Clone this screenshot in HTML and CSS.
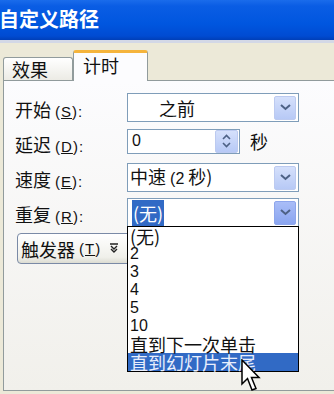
FILE: index.html
```html
<!DOCTYPE html>
<html lang="zh-CN">
<head>
    <meta charset="UTF-8">
    <meta name="viewport" content="width=device-width, initial-scale=1.0">
    <title>自定义路径</title>
    <link rel="stylesheet" href="styles.css">
</head>
<body>
    <div class="titlebar">自定义路径</div>
    <div class="titlestrip"></div>

    <div class="dialog">
        <div class="tabs">
            <div class="tab">效果</div>
            <div class="tab active">计时</div>
        </div>

        <div class="panel">
            <div class="row">
                <label>开始 <span class="key">(<u>S</u>):</span></label>
                <div class="select">
                    <span class="value start">之前</span>
                    <span class="dropbtn"><svg width="11" height="7" viewBox="0 0 11 7"><path d="M1 1 L5.5 5 L10 1" fill="none" stroke="#4d6185" stroke-width="2"/></svg></span>
                </div>
            </div>

            <div class="row">
                <label>延迟 <span class="key">(<u>D</u>):</span></label>
                <div class="delay">
                    <div class="spin">
                        <span class="value lat">0</span>
                        <span class="spinbtn">
                            <svg width="9" height="16" viewBox="0 0 9 16"><path d="M1 6 L4.5 2.5 L8 6 M1 10 L4.5 13.5 L8 10" fill="none" stroke="#4d6185" stroke-width="1.6"/></svg>
                        </span>
                    </div>
                    <span class="unit">秒</span>
                </div>
            </div>

            <div class="row">
                <label>速度 <span class="key">(<u>E</u>):</span></label>
                <div class="select">
                    <span class="value">中速 <span class="lat">(2</span> 秒)</span>
                    <span class="dropbtn"><svg width="11" height="7" viewBox="0 0 11 7"><path d="M1 1 L5.5 5 L10 1" fill="none" stroke="#4d6185" stroke-width="2"/></svg></span>
                </div>
            </div>

            <div class="row">
                <label>重复 <span class="key">(<u>R</u>):</span></label>
                <div class="select open">
                    <span class="value"><span class="picked">(无)</span></span>
                    <span class="dropbtn hot"><svg width="11" height="7" viewBox="0 0 11 7"><path d="M1 1 L5.5 5 L10 1" fill="none" stroke="#4d6185" stroke-width="2"/></svg></span>

                    <ul class="droplist">
                        <li>(无)</li>
                        <li class="lat">2</li>
                        <li class="lat">3</li>
                        <li class="lat">4</li>
                        <li class="lat">5</li>
                        <li class="lat">10</li>
                        <li>直到下一次单击</li>
                        <li class="current">直到幻灯片末尾</li>
                    </ul>
                </div>
            </div>

            <button class="trigger">触发器 <span class="key">(<u>T</u>)</span>
                <svg class="dbl" width="8" height="11" viewBox="0 0 8 11"><path d="M0 1 H8 M1 3 L4 6 L7 3 M1 6 L4 9 L7 6" fill="none" stroke="#222" stroke-width="1.4"/></svg>
            </button>
        </div>
    </div>

    <svg class="cursor" width="22" height="36" viewBox="0 0 22 36">
        <path d="M1 1 L1 25 L6.5 19.5 L11 31 L15 29.5 L10.5 18.5 L18 18.5 Z" fill="#fff" stroke="#000" stroke-width="1.5" stroke-linejoin="miter"/>
    </svg>
</body>
</html>
```

FILE: styles.css
```css
body {
    margin: 0;
    width: 334px;
    height: 394px;
    overflow: hidden;
    position: relative;
    background-color: #ece9d8;
    font-family: "Noto Sans CJK SC", "Liberation Sans", sans-serif;
    font-size: 18px;
    color: #111;
}
.titlebar {
    height: 40px;
    box-sizing: border-box;
    padding: 7px 0 0 0;
    text-indent: -1px;
    color: #fff;
    font-weight: bold;
    font-size: 20px;
    line-height: 24px;
    background: linear-gradient(to bottom, #1a6ceb 0%, #0a5de4 15%, #0056df 60%, #004bd2 90%, #003fb8 100%);
}
.titlestrip {
    height: 3px;
    background-color: #d3d8e6;
}
.dialog {
    padding: 7px 0 0 3px;
}
.tabs {
    display: flex;
    align-items: flex-end;
    height: 30px;
    position: relative;
    z-index: 1;
}
.tab {
    width: 70px;
    height: 23px;
    box-sizing: border-box;
    border: 1px solid #919b9c;
    border-bottom: none;
    border-radius: 3px 3px 0 0;
    background: linear-gradient(to bottom, #ffffff, #ecebe5);
    padding-left: 8px;
    line-height: 22px;
    font-size: 18px;
}
.tab.active {
    width: 75px;
    height: 31px;
    margin-bottom: -1px;
    border-top: 3px solid #f5b43c;
    background: #fcfcfe;
    padding-left: 9px;
    line-height: 24px;
}
.panel {
    height: 311px;
    box-sizing: border-box;
    border: 1px solid #919b9c;
    border-right: none;
    background: linear-gradient(to bottom, #fcfcfe, #f1f0eb);
    padding: 12px 0 0 11px;
}
.row {
    display: grid;
    grid-template-columns: 112px 172px;
    align-items: center;
    height: 29px;
    margin-bottom: 6px;
}
.row label {
    white-space: nowrap;
    padding-top: 2px;
}
.key {
    font-family: "Liberation Sans", sans-serif;
    font-size: 15px;
    letter-spacing: 1px;
}
.lat {
    font-family: "Liberation Sans", sans-serif;
    font-size: 16px;
}
.select {
    position: relative;
    height: 29px;
    box-sizing: border-box;
    border: 1px solid #7f9db9;
    background-color: #fff;
    display: flex;
    align-items: center;
    justify-content: space-between;
    padding: 0 2px 0 2px;
}
.value {
    white-space: nowrap;
    line-height: 20px;
}
.value.start {
    padding-left: 29px;
}
.dropbtn {
    width: 22px;
    height: 24px;
    box-sizing: border-box;
    border: 1px solid #bccaf0;
    border-radius: 2px;
    background: linear-gradient(to bottom, #d5e0fb, #b7c9f6);
    display: flex;
    align-items: center;
    justify-content: center;
}
.dropbtn.hot {
    border-color: #8ea6ec;
    background: linear-gradient(to bottom, #a9bdf7, #8aa5f0);
}
.picked {
    background-color: #316ac5;
    color: #fff;
    padding: 0 1px;
    margin-left: 2px;
}
.delay {
    display: flex;
    align-items: center;
    align-self: start;
}
.spin {
    width: 113px;
    height: 25px;
    box-sizing: border-box;
    border: 1px solid #7f9db9;
    background-color: #fff;
    display: flex;
    align-items: center;
    justify-content: space-between;
    padding: 0 1px 0 4px;
}
.spinbtn {
    width: 23px;
    height: 23px;
    box-sizing: border-box;
    border: 1px solid #bccaf0;
    border-radius: 2px;
    background: linear-gradient(to bottom, #d5e0fb, #b7c9f6);
    display: flex;
    align-items: center;
    justify-content: center;
}
.unit {
    margin-left: 10px;
}
.droplist {
    position: absolute;
    left: -1px;
    top: 27px;
    width: 172px;
    margin: 0;
    padding: 0;
    list-style: none;
    box-sizing: border-box;
    border: 1px solid #000;
    background-color: #fff;
    z-index: 2;
}
.droplist li {
    height: 18px;
    line-height: 18px;
    padding-left: 2px;
    white-space: nowrap;
}
.droplist li.lat {
    font-size: 16px;
}
.droplist li.current {
    background-color: #316ac5;
    color: #e8eefc;
}
.trigger {
    margin: 4px 0 0 2px;
    width: 126px;
    height: 31px;
    border: 1px solid #7a8aa6;
    border-radius: 4px;
    background: linear-gradient(to bottom, #ffffff, #f0f0ea 80%, #dcdcd2);
    font-family: "Noto Sans CJK SC", "Liberation Sans", sans-serif;
    font-size: 18px;
    color: #111;
    text-align: left;
    padding: 0 0 0 3px;
    display: flex;
    align-items: center;
    white-space: nowrap;
}
.trigger .key {
    margin-left: 4px;
}
.dbl {
    margin-left: 9px;
}
.cursor {
    position: absolute;
    left: 241px;
    top: 359px;
    z-index: 5;
}
```
